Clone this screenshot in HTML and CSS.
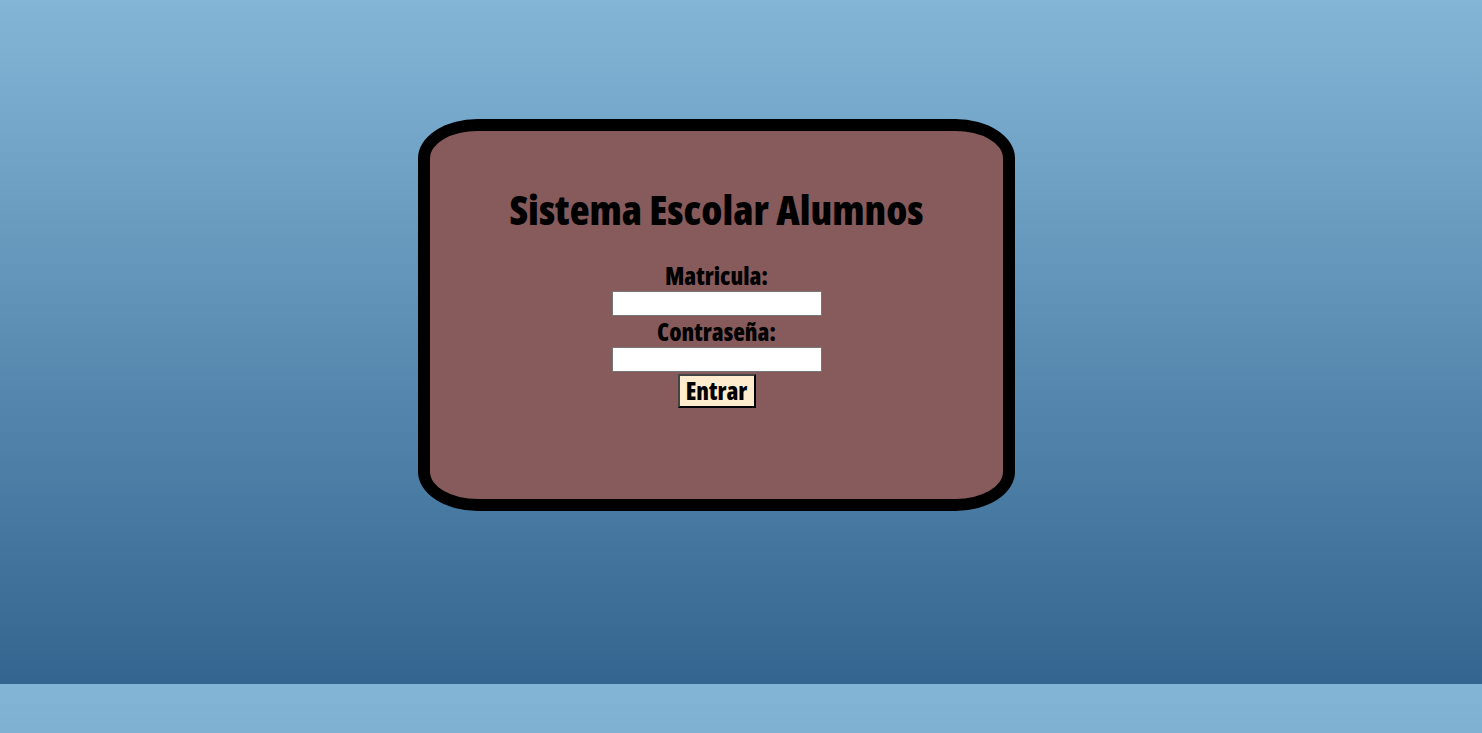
FILE: index.html
```html
<!DOCTYPE html>
<html lang="es">
<head>
<meta charset="utf-8">
<title>Sistema Escolar Alumnos</title>
<link rel="stylesheet" href="styles.css">
</head>
<body>
<div class="page">
  <form class="card">
    <h1 class="title">Sistema Escolar Alumnos</h1>
    <label class="label" for="mat">Matricula:</label>
    <input class="field" id="mat" type="text">
    <label class="label" for="pwd">Contraseña:</label>
    <input class="field" id="pwd" type="password">
    <button class="btn" type="button">Entrar</button>
  </form>
</div>
</body>
</html>
```
FILE: styles.css
```css
html {
  background: linear-gradient(#83b6d6, #336590) 0 0 / 100% 684px repeat;
  min-height: 100%;
}
body {
  margin: 0;
  font-family: "Open Sans", "DejaVu Sans Condensed", sans-serif;
  font-stretch: 75%;
  font-weight: 800;
}
.page {
  padding-top: 119px;
  padding-left: 418px;
}
.card {
  box-sizing: border-box;
  width: 597px;
  height: 392px;
  border: 12px solid #000;
  border-radius: 10%;
  background: #875b5b;
  display: flex;
  flex-direction: column;
  align-items: center;
  padding-top: 54px;
}
.title {
  margin: 0 0 27px;
  font-size: 41px;
  font-weight: 800;
  line-height: 48px;
  color: #000;
}
.label {
  font-size: 24px;
  line-height: 31px;
  color: #000;
}
.field {
  box-sizing: border-box;
  width: 210px;
  height: 25px;
  margin: 0;
  border: 1px solid #767676;
  background: #fff;
}
.btn {
  box-sizing: border-box;
  margin-top: 2px;
  width: 78px;
  height: 34px;
  padding: 0;
  font-family: inherit;
  font-stretch: inherit;
  font-weight: 800;
  font-size: 24px;
  line-height: 30px;
  color: #000;
  background: #ffebcd;
  border: 2px solid;
  border-color: #444 #000 #000 #444;
}
```
